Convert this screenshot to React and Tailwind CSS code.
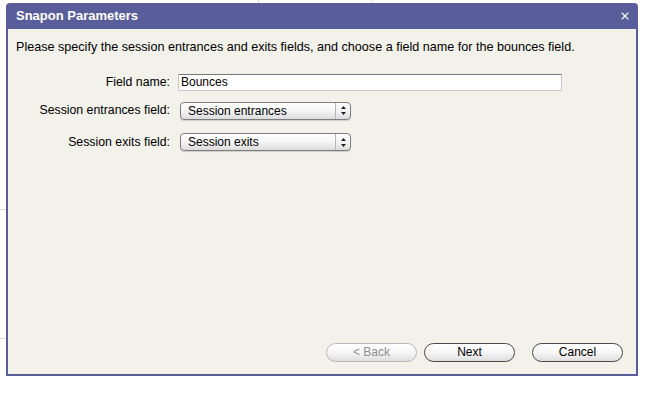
import { X } from "lucide-react";

const font = { fontFamily: '"Liberation Sans", Arial, sans-serif' };

function Stepper() {
  return (
    <svg width="7" height="11" viewBox="0 0 7 11" className="block">
      <path d="M3.5 1 L6 4 L1 4 Z" fill="#222" />
      <path d="M3.5 10 L6 7 L1 7 Z" fill="#222" />
    </svg>
  );
}

function Select({ value }) {
  return (
    <div className="ml-[2px] flex h-[18px] w-[171px] items-stretch rounded-[4px] border border-[#7d7d7d] bg-gradient-to-b from-white via-[#f4f4f4] to-[#dcdcdc] shadow-[0_1px_1px_rgba(0,0,0,0.15)]">
      <span className="flex-1 pl-[7px] text-[12px] leading-[16px] text-black">{value}</span>
      <span className="flex w-[15px] items-center justify-center border-l border-[#b5b5b5]">
        <Stepper />
      </span>
    </div>
  );
}

function Button({ children, disabled }) {
  return (
    <button
      className={`block h-[19px] w-[91px] rounded-full border text-[12px] leading-[17px] bg-gradient-to-b from-white via-[#f6f6f6] to-[#dedede] ${
        disabled ? "border-[#b8b8b8] text-[#8e8e8e]" : "border-[#4a4a4a] text-black"
      }`}
    >
      {children}
    </button>
  );
}

export default function App() {
  return (
    <div className="relative h-[393px] w-[645px] overflow-hidden bg-white" style={font}>
      <div className="absolute left-0 top-[209px] h-px w-[6px] bg-[#dcdcdc]" />
      <div className="absolute left-0 top-[338px] h-px w-[6px] bg-[#dcdcdc]" />
      <div className="absolute left-[258px] top-0 h-[3px] w-[115px] border-x border-[#e2e2e2]" />

      <div className="absolute left-[6px] top-[3px] flex h-[373px] w-[632px] flex-col">
        <div className="flex h-[26px] items-center justify-between rounded-t-[4px] bg-[#595e9b] pl-[10px] pr-[7px]">
          <span className="text-[13px] font-bold text-white">Snapon Parameters</span>
          <X size={12} strokeWidth={2.2} color="white" />
        </div>
        <div className="flex flex-1 flex-col border-x-2 border-b-2 border-[#595e9b] bg-[#f2f1ea]">
          <p className="pl-[8px] pt-[11px] text-[12.6px] leading-[15px] text-black">
            Please specify the session entrances and exits fields, and choose a field name for the bounces field.
          </p>
          <div className="mt-[18px] flex flex-col gap-[10px]">
            <div className="flex items-center gap-[8px]">
              <span className="w-[162px] text-right text-[12.3px] text-black">Field name:</span>
              <input
                defaultValue="Bounces"
                className="h-[17px] w-[384px] border border-[#c9c9c9] border-t-[#777] bg-white px-[2px] text-[12px] leading-[15px] text-black outline-none"
                style={font}
              />
            </div>
            <div className="flex items-center gap-[8px]">
              <span className="w-[162px] text-right text-[12.3px] text-black">Session entrances field:</span>
              <Select value="Session entrances" />
            </div>
            <div className="mt-[3px] flex items-center gap-[8px]">
              <span className="w-[162px] text-right text-[12.3px] text-black">Session exits field:</span>
              <Select value="Session exits" />
            </div>
          </div>
          <div className="mt-auto mb-[12px] flex items-center justify-end pr-[13px]">
            <div className="flex gap-[7px]">
              <Button disabled>&lt; Back</Button>
              <Button>Next</Button>
            </div>
            <div className="ml-[17px]">
              <Button>Cancel</Button>
            </div>
          </div>
        </div>
      </div>
    </div>
  );
}
